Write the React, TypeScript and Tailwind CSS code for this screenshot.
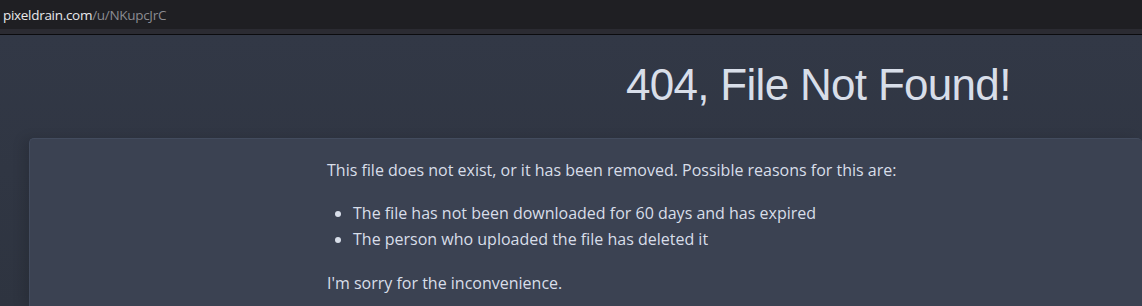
export default function App() {
  return (
    <div className="w-[1142px] h-[306px] overflow-hidden bg-[#2e3440] flex flex-col">
      <div className="h-[29px] bg-[#1f1f23] flex items-center pl-[3px] pt-[2px]">
        <span className="text-[13.5px] text-[#e8e8ea] font-['Open_Sans',sans-serif] tracking-[-0.3px]">
          pixeldrain.com<span className="text-[#8b8b91]">/u/NKupcJrC</span>
        </span>
      </div>
      <div className="h-[5px] bg-[#2b2b32]" />
      <div className="h-px bg-[#0b0b0e]" />
      <div className="flex-1 bg-gradient-to-b from-[#323846] to-[#2e3440] flex flex-col">
        <h1 className="pl-[626px] pt-[28px] h-[103px] text-[44px] leading-[44px] text-[#d8dee9] font-['Liberation_Sans',Arial,sans-serif] tracking-[-0.7px]">
          404, File Not Found!
        </h1>
        <div className="ml-[29px] flex-1 rounded-t-[5px] bg-[#3b4252] border-t border-l border-[#434c5e] shadow-[-6px_0_12px_rgba(0,0,0,0.12)] pl-[297px] pt-[18px] text-[16px] leading-[26px] text-[#d8dee9] font-['Open_Sans',sans-serif]">
          <p>This file does not exist, or it has been removed. Possible reasons for this are:</p>
          <ul className="list-disc pl-[26px] mt-[17px]">
            <li className="h-[26px]">The file has not been downloaded for 60 days and has expired</li>
            <li className="h-[26px]">The person who uploaded the file has deleted it</li>
          </ul>
          <p className="mt-[18px]">I'm sorry for the inconvenience.</p>
        </div>
      </div>
    </div>
  );
}
